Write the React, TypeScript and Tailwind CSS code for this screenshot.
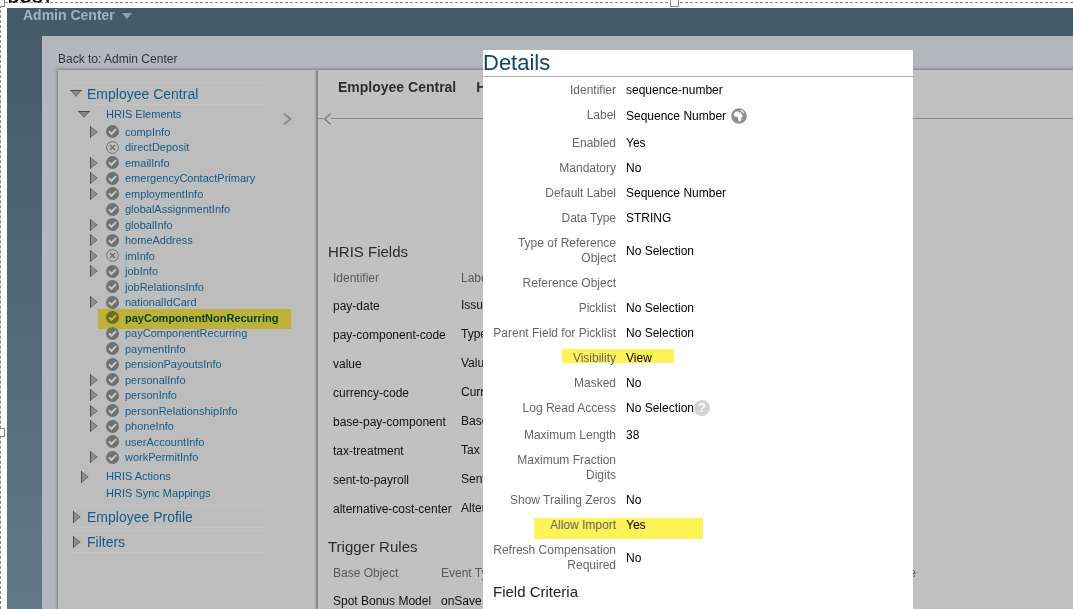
import React, { useState } from "react";
import { clsx } from "clsx";

interface TreeNode {
  name: string;
  expandable?: boolean;
  disabled?: boolean;
}

interface DetailField {
  label: string;
  value?: string;
  icon?: "globe" | "help";
  marker?: string;
}

const hrisElements: TreeNode[] = [
  { name: "compInfo", expandable: true },
  { name: "directDeposit", disabled: true },
  { name: "emailInfo", expandable: true },
  { name: "emergencyContactPrimary", expandable: true },
  { name: "employmentInfo", expandable: true },
  { name: "globalAssignmentInfo" },
  { name: "globalInfo", expandable: true },
  { name: "homeAddress", expandable: true },
  { name: "imInfo", expandable: true, disabled: true },
  { name: "jobInfo", expandable: true },
  { name: "jobRelationsInfo" },
  { name: "nationalIdCard", expandable: true },
  { name: "payComponentNonRecurring" },
  { name: "payComponentRecurring" },
  { name: "paymentInfo" },
  { name: "pensionPayoutsInfo" },
  { name: "personalInfo", expandable: true },
  { name: "personInfo", expandable: true },
  { name: "personRelationshipInfo", expandable: true },
  { name: "phoneInfo", expandable: true },
  { name: "userAccountInfo" },
  { name: "workPermitInfo", expandable: true },
];

const hrisFields = [
  ["pay-date", "Issue"],
  ["pay-component-code", "Type"],
  ["value", "Value"],
  ["currency-code", "Curren"],
  ["base-pay-component", "Base"],
  ["tax-treatment", "Tax"],
  ["sent-to-payroll", "Sent"],
  ["alternative-cost-center", "Altern"],
];

const details: DetailField[] = [
  { label: "Identifier", value: "sequence-number" },
  { label: "Label", value: "Sequence Number", icon: "globe" },
  { label: "Enabled", value: "Yes" },
  { label: "Mandatory", value: "No" },
  { label: "Default Label", value: "Sequence Number" },
  { label: "Data Type", value: "STRING" },
  { label: "Type of Reference Object", value: "No Selection" },
  { label: "Reference Object" },
  { label: "Picklist", value: "No Selection" },
  { label: "Parent Field for Picklist", value: "No Selection" },
  { label: "Visibility", value: "View", marker: "left-[79px] top-[3px] h-[14px] w-[112px]" },
  { label: "Masked", value: "No" },
  { label: "Log Read Access", value: "No Selection", icon: "help" },
  { label: "Maximum Length", value: "38" },
  { label: "Maximum Fraction Digits" },
  { label: "Show Trailing Zeros", value: "No" },
  { label: "Allow Import", value: "Yes", marker: "left-[51px] top-[5px] h-[21px] w-[169px]" },
  { label: "Refresh Compensation Required", value: "No" },
];

function Caret({ open = false }: { open?: boolean }) {
  return open ? (
    <svg className="h-[7px] w-3 shrink-0" viewBox="0 0 12 7">
      <path d="M.8.5h10.4L6 6.3Z" fill="#868686" stroke="#6c6c6c" />
      <path d="M0 .5h12" stroke="#4c4c4c" />
    </svg>
  ) : (
    <svg className="h-3 w-2 shrink-0" viewBox="0 0 8 12">
      <path d="M.5.8v10.400L7.200 6Z" fill="#8e8e8e" stroke="#6c6c6c" />
      <path d="M.5 0v12" stroke="#505050" />
    </svg>
  );
}

function StatusIcon({ disabled }: { disabled?: boolean }) {
  return (
    <svg className="mb-px h-[13px] w-[13px] shrink-0" viewBox="0 0 13 13" fill="none">
      {disabled ? (
        <>
          <circle cx="6.5" cy="6.5" r="5.900" stroke="#707070" />
          <path d="m4 4 5 5m0-5L4 9" stroke="#707070" strokeWidth="1.500" />
        </>
      ) : (
        <>
          <circle cx="6.5" cy="6.5" r="6.500" fill="#707070" />
          <path d="m3 6.300 2.500 2.600 4.500-4.800" stroke="#c8c8c8" strokeWidth="2" />
        </>
      )}
    </svg>
  );
}

function GlobeIcon() {
  return (
    <svg className="h-4 w-4 shrink-0" viewBox="0 0 16 16">
      <circle cx="8" cy="8" r="7.800" fill="#8f8f8f" />
      <path d="M2.500 6.300 4.200 4l2.600-.8 1.400 1.400 1.600 0 1.200 2.600 1.200.4-1.600 2-.6 2.400L9 13.500H7.600L7.200 11 6.600 8.800H4Z" fill="#fff" />
      <path d="m8.600 2.300 2.200-.6 2.600 2.100-.4 2-2-1.800Z" fill="#dedede" />
    </svg>
  );
}

function HelpIcon() {
  return (
    <button
      aria-label="Help"
      className="flex h-4 w-4 shrink-0 items-center justify-center rounded-full bg-[#d4d4d4] text-[13px] leading-4 font-bold text-white"
    >
      ?
    </button>
  );
}

function Section({ title, open, onToggle, children }: {
  title: string;
  open: boolean;
  onToggle: () => void;
  children?: React.ReactNode;
}) {
  return (
    <section>
      <button
        onClick={onToggle}
        className="flex h-[23px] w-[200px] items-center rounded-sm border-y border-[#c3c3c3] text-sm text-[#145a88]"
      >
        <span className={clsx("flex w-[17px]", !open && "pl-[3px]")}>
          <Caret open={open} />
        </span>
        {title}
      </button>
      {open && children}
    </section>
  );
}

function ElementTree() {
  const [open, setOpen] = useState("Employee Central");
  const toggle = (name: string) => setOpen(open === name ? "" : name);

  return (
    <nav className="relative w-[258px] shrink-0 bg-[#bdbdbd] pt-3 pl-3 text-[11px] text-[#145a88] shadow-[0_0_3px_1px_#77797c]">
      <Section title="Employee Central" open={open === "Employee Central"} onToggle={() => toggle("Employee Central")}>
        <div className="flex h-[19px] items-center pl-2">
          <span className="flex w-7"><Caret open /></span>
          <a href="#elements">HRIS Elements</a>
        </div>
        <ul>
          {hrisElements.map((node) => {
            const selected = node.name === "payComponentNonRecurring";
            return (
              <li key={node.name} className="relative flex items-center pl-5 odd:h-4 even:h-[15px]">
                <span className="mb-px flex w-4">{node.expandable && <Caret />}</span>
                <StatusIcon disabled={node.disabled} />
                <a href={`#${node.name}`} className={clsx("pl-[6px] leading-[15px]", selected && "font-bold text-[#004a6c]")}>
                  {node.name}
                </a>
                {selected && (
                  <span className="absolute -top-px left-7 h-5 w-[193px] bg-[#fff04a] mix-blend-multiply" />
                )}
              </li>
            );
          })}
        </ul>
        <div className="mt-[3px] flex h-[17px] items-center pl-[11px]">
          <span className="flex w-[25px]"><Caret /></span>
          <a href="#actions">HRIS Actions</a>
        </div>
        <div className="mb-[3px] flex h-[17px] items-center pl-9">
          <a href="#sync">HRIS Sync Mappings</a>
        </div>
      </Section>
      <Section title="Employee Profile" open={open === "Employee Profile"} onToggle={() => toggle("Employee Profile")} />
      <div className="h-[2px]" />
      <Section title="Filters" open={open === "Filters"} onToggle={() => toggle("Filters")} />
      <button aria-label="Collapse panel" className="absolute top-[43px] right-6">
        <svg className="h-3 w-[9px]" viewBox="0 0 9 12" fill="none">
          <path d="m1 .7 6.500 5.300L1 11.300" stroke="#828c94" strokeWidth="2" />
        </svg>
      </button>
    </nav>
  );
}

function MainPanel() {
  return (
    <main className="relative min-w-0 flex-1 bg-[#c1c1c1] shadow-[0_0_3px_1px_#77797c]">
      <div className="flex h-[49px] gap-5 border-b border-[#8b8b8b] pt-[7px] pl-5 text-sm font-bold text-[#2d2d2d]">
        <a href="#ec">Employee Central</a>
        <a href="#hris">HRIS</a>
      </div>
      <button aria-label="Previous" className="absolute top-[43px] left-[5px] bg-[#c1c1c1]">
        <svg className="h-3 w-2" viewBox="0 0 8 12" fill="none">
          <path d="M7.500.7 1.500 6l6 5.300" stroke="#6d7880" strokeWidth="1.200" />
        </svg>
      </button>

      <h2 className="pt-[123px] pl-[10px] text-[15px] leading-5 text-[#2b2b2b]">HRIS Fields</h2>
      <table className="mt-[3px] ml-[15px] text-left text-xs text-[#111]">
        <thead>
          <tr className="h-[26px] text-[#585858]">
            <th className="w-32 font-normal">Identifier</th>
            <th className="font-normal">Label</th>
          </tr>
        </thead>
        <tbody>
          {hrisFields.map(([id, label]) => (
            <tr key={id} className="h-[29px]">
              <td>{id}</td>
              <td className="pb-[2px]">{label}</td>
            </tr>
          ))}
        </tbody>
      </table>

      <h2 className="mt-[14px] pl-[10px] text-[15px] leading-5 text-[#2b2b2b]">Trigger Rules</h2>
      <table className="mt-[3px] ml-[15px] text-left text-xs text-[#111]">
        <thead>
          <tr className="h-[26px] text-[#585858]">
            <th className="w-[108px] font-normal">Base Object</th>
            <th className="w-[415px] font-normal">Event Type</th>
            <th className="font-normal">Rule Name</th>
          </tr>
        </thead>
        <tbody>
          <tr className="h-[29px]">
            <td>Spot Bonus Model</td>
            <td>onSave</td>
            <td />
          </tr>
        </tbody>
      </table>
    </main>
  );
}

function DetailsDialog() {
  return (
    <div role="dialog" aria-label="Details" className="absolute top-[50px] bottom-0 left-[483px] w-[430px] overflow-hidden rounded-t-[1px] bg-white">
      <h1 className="h-[27px] border-b border-[#b3b3b3] text-[22px] leading-[26px] text-[#0b4763]">Details</h1>
      <dl className="pt-px text-xs leading-[15px]">
        {details.map((field) => (
          <div key={field.label} className="relative flex items-center">
            {field.marker && <span className={clsx("absolute bg-[#fff457]", field.marker)} />}
            <dt className="relative w-[133px] shrink-0 self-start py-[5px] pl-2 text-right text-[#666]">{field.label}</dt>
            <dd
              className={clsx(
                "relative flex items-center pl-[10px] text-black",
                field.icon === "globe" && "gap-[5px] pt-[5px] pb-[7px]",
                field.icon === "help" && "pt-1 pb-[7px]"
              )}
            >
              {field.value}
              {field.icon === "globe" && <GlobeIcon />}
              {field.icon === "help" && <HelpIcon />}
            </dd>
          </div>
        ))}
      </dl>
      <h2 className="pt-1 pl-[10px] text-[15px] leading-5 text-[#222]">Field Criteria</h2>
    </div>
  );
}

export default function App() {
  return (
    <div className="relative flex h-screen flex-col overflow-hidden bg-white font-['Liberation_Sans',Arial,sans-serif]">
      <div className="relative h-2 shrink-0">
        <span className="absolute bottom-[2px] left-2 text-base leading-none font-bold text-black">DOST</span>
      </div>
      <div className="ml-[7px] flex min-h-0 flex-1 flex-col bg-gradient-to-b from-[#445a68] to-[#627886]">
        <header className="h-7 shrink-0 pl-4">
          <button className="flex items-center gap-[7px] text-sm leading-[15px] font-bold text-[#9fb4c1]">
            Admin Center
            <svg className="h-[6px] w-[10px]" viewBox="0 0 10 6">
              <path d="M0 0h10L5 6Z" fill="#8ba1af" />
            </svg>
          </button>
        </header>
        <div className="ml-[35px] flex min-h-0 flex-1 flex-col bg-[#b4b8be] pl-4">
          <div className="h-[34px] shrink-0 pt-4 text-xs leading-[15px] text-[#333]">
            <a href="#admin">Back to: Admin Center</a>
          </div>
          <div className="flex min-h-0 flex-1 gap-[2px]">
            <ElementTree />
            <MainPanel />
          </div>
        </div>
      </div>

      <DetailsDialog />

      {/* selection frame around the embedded page */}
      <div className="pointer-events-none absolute inset-x-0 top-[2px] border-t border-dashed border-[#888]" />
      <div className="pointer-events-none absolute inset-y-0 left-0 border-l border-dashed border-[#888]" />
      <span className="absolute -top-[2px] -left-1 h-[9px] w-[9px] border border-[#888] bg-white" />
      <span className="absolute -top-[2px] left-[670px] h-[9px] w-[9px] border border-[#888] bg-white" />
      <span className="absolute top-[428px] -left-1 h-[9px] w-[9px] border border-[#888] bg-white" />
    </div>
  );
}
